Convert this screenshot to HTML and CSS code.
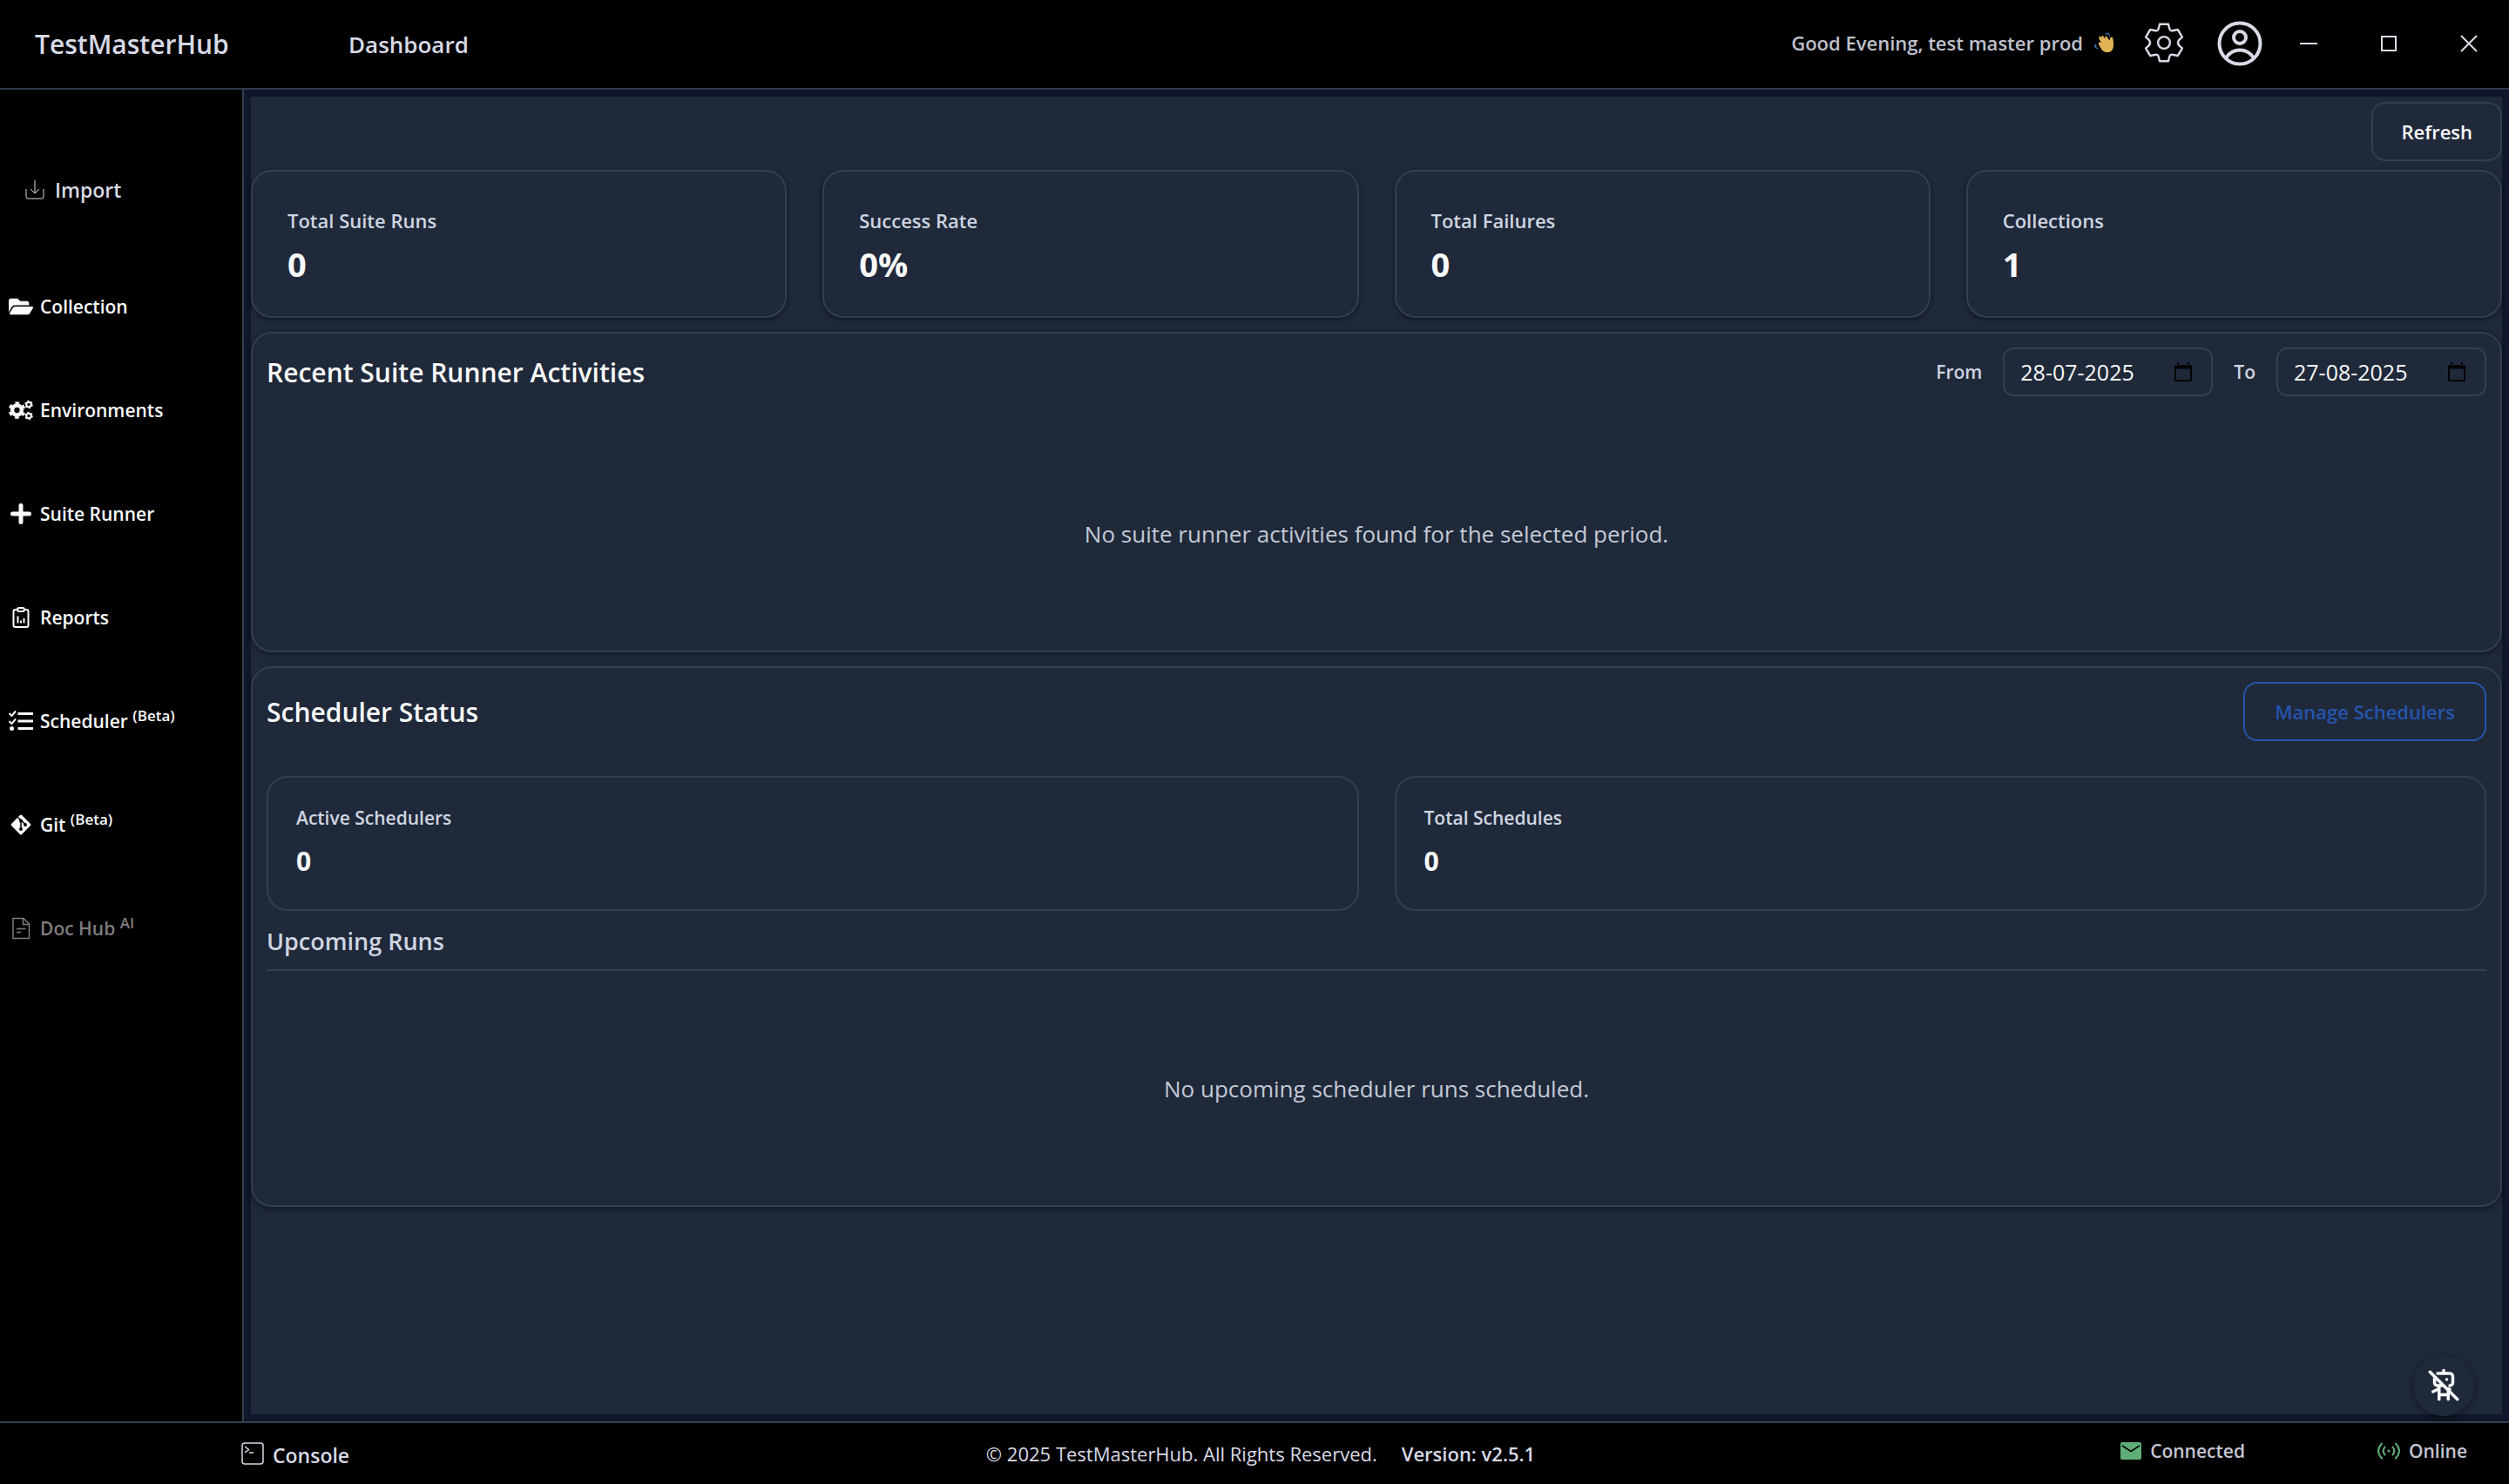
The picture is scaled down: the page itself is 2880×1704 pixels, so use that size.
FILE: index.html
```html
<!DOCTYPE html>
<html lang="en">
<head>
<meta charset="utf-8">
<title>TestMasterHub</title>
<link rel="stylesheet" href="styles.css">
</head>
<body>
<div class="app">
  <header class="topbar">
    <div class="brand">TestMasterHub</div>
    <h1 class="page-title">Dashboard</h1>
    <p class="greeting">Good Evening, test master prod
      <svg class="wave" viewBox="34 80 68 70" aria-hidden="true"><path fill="#e0b354" d="M54 106Q49 97 53 94Q57 92 61 98L64 102L60 95Q60 90 65 92L73 104L71 97Q73 91 78 95L87 108L89 99Q93 93 98 99Q101 112 100 128Q98 144 84 147Q70 149 61 138L51 122Q48 114 54 113L59 115Z"/><path fill="none" stroke="#3f6bb5" stroke-width="3" d="M72 86q6-5 9 3M79 83q8 2 8 13M42 119q-5 6 1 11M37 124q1 9 11 10"/></svg>
    </p>
    <button class="icon-btn gear-btn" aria-label="Settings"><svg viewBox="-67 -67 134 134" class="gear"><g fill="none" stroke="currentColor" stroke-width="7" stroke-linejoin="round"><path d="M-14.500-62H14.500L18-48Q20-38 28-40L46.400-43.600 60.900-18.400 50-9Q43 0 50 9L60.900 18.400 46.400 43.600 28 40Q20 38 18 48L14.500 62H-14.500L-18 48Q-20 38-28 40L-46.400 43.600-60.900 18.400-50 9Q-43 0-50-9L-60.900-18.400-46.400-43.600-28-40Q-20-38-18-48Z"/><circle r="20"/></g></svg></button>
    <button class="icon-btn user-btn" aria-label="Account"><svg viewBox="0 0 52 52" class="user"><g fill="none" stroke="currentColor" stroke-width="4"><circle cx="26" cy="26" r="23.500"/><circle cx="26" cy="19" r="7"/><path d="M10 42.500C18 30.500 34 30.500 42 42.500"/></g></svg></button>
    <div class="window-controls">
      <button class="icon-btn" aria-label="Minimize"><svg viewBox="0 0 20 20" class="win"><path d="M0 10H20"/></svg></button>
      <button class="icon-btn" aria-label="Maximize"><svg viewBox="0 0 20 20" class="win"><path d="M2 2H18V18H2Z"/></svg></button>
      <button class="icon-btn" aria-label="Close"><svg viewBox="0 0 20 20" class="win"><path d="M1 1L19 19M19 1L1 19"/></svg></button>
    </div>
  </header>

  <div class="body">
    <nav class="sidebar">
      <button class="import"><svg class="import-icon" viewBox="0 0 22 22"><path fill="none" stroke="currentColor" d="M1 10V19Q1 21 3 21H19Q21 21 21 19V10M11 0V15M6 10L11 15L16 10"/></svg>Import</button>
      <ul class="nav">
        <li><a href="#"><svg viewBox="0 0 576 512"><path fill="currentColor" d="M572.700 292.100 500.300 416.200A64 64 0 0 1 445 448H45c-18.500 0-30-20.100-20.700-36.100L96.700 287.800A64 64 0 0 1 152 256h400c18.500 0 30 20.100 20.700 36.100zM152 224h328v-48c0-26.500-21.500-48-48-48H272l-64-64H48C21.500 64 0 85.500 0 112v278l69-118.300C86.200 242.300 118 224 152 224z"/></svg>Collection</a></li>
        <li><a href="#"><svg viewBox="0 0 28 24"><g fill="none" stroke="currentColor"><circle cx="9.500" cy="12" r="5.400" stroke-width="4.500"/><circle cx="9.500" cy="12" r="8.500" stroke-width="2.600" stroke-dasharray="4.450 4.450" stroke-dashoffset="2.200" transform="rotate(30 9.500 12)"/><circle cx="23" cy="5.500" r="2.700" stroke-width="2"/><circle cx="23" cy="5.500" r="4" stroke-width="1.500" stroke-dasharray="2.100 2.100"/><circle cx="23" cy="18.500" r="2.700" stroke-width="2"/><circle cx="23" cy="18.500" r="4" stroke-width="1.500" stroke-dasharray="2.100 2.100"/></g></svg>Environments</a></li>
        <li><a href="#"><svg viewBox="0 0 28 28"><path stroke="currentColor" stroke-width="5" stroke-linecap="round" d="M14 4.500V23.500M4.500 14H23.500"/></svg>Suite Runner</a></li>
        <li><a href="#"><svg viewBox="0 0 28 28"><g fill="none" stroke="currentColor" stroke-width="2"><rect x="5.500" y="5" width="17" height="20" rx="2"/><path d="M10.500 12.500V20.500M14 17.500V20.500M17.500 15V20.500"/><rect x="10" y="3" width="8" height="4" rx="2" fill="#000"/></g></svg>Reports</a></li>
        <li><a href="#"><svg viewBox="0 0 28 28"><path fill="none" stroke="currentColor" stroke-width="3" d="M10.500 5.500H28M10.500 14H28M10.500 22.500H28"/><path fill="none" stroke="currentColor" stroke-width="2" d="M.500 5L3.500 8L8 2.500M.500 14L3.500 17L8 11.500"/><circle cx="3.500" cy="22.500" r="2.500" fill="currentColor"/></svg><span>Scheduler <sup>(Beta)</sup></span></a></li>
        <li><a href="#"><svg viewBox="0 0 28 28"><rect x="5.500" y="5.500" width="17" height="17" rx="1.500" fill="currentColor" transform="rotate(45 14 14)"/><g stroke="#000" stroke-width="1.500" fill="#000"><path fill="none" d="M10.500 5.500L19.500 14M14 9V19"/><circle cx="14" cy="9.500" r="1.200"/><circle cx="14" cy="19" r="1.200"/><circle cx="19" cy="14" r="1.200"/></g></svg><span>Git <sup>(Beta)</sup></span></a></li>
        <li><a href="#" class="muted"><svg viewBox="0 0 28 28"><path fill="none" stroke="currentColor" stroke-width="1.500" d="M5 2.500H17L23.500 9V25.500H5ZM16.500 2.500V9.500H23.500M9 14.500H19.500M9 18.500H14"/></svg><span>Doc Hub <sup>AI</sup></span></a></li>
      </ul>
    </nav>

    <div class="stage">
      <main class="panel">
        <div class="actions"><button class="btn">Refresh</button></div>

        <section class="stats">
          <article class="card stat"><h3>Total Suite Runs</h3><p>0</p></article>
          <article class="card stat"><h3>Success Rate</h3><p>0%</p></article>
          <article class="card stat"><h3>Total Failures</h3><p>0</p></article>
          <article class="card stat"><h3>Collections</h3><p>1</p></article>
        </section>

        <section class="card block">
          <div class="block-head">
            <h2>Recent Suite Runner Activities</h2>
            <div class="range">
              <label for="from">From</label>
              <div class="date"><input id="from" type="text" value="28-07-2025"><button class="icon-btn" aria-label="Pick start date"><svg viewBox="0 0 20 22"><path d="M2 3H18Q20 3 20 5V20Q20 22 18 22H2Q0 22 0 20V5Q0 3 2 3ZM2 7.500V20H18V7.500ZM3 0H5V4H3ZM15 0H17V4H15Z" fill-rule="evenodd"/></svg></button></div>
              <label for="to">To</label>
              <div class="date"><input id="to" type="text" value="27-08-2025"><button class="icon-btn" aria-label="Pick end date"><svg viewBox="0 0 20 22"><path d="M2 3H18Q20 3 20 5V20Q20 22 18 22H2Q0 22 0 20V5Q0 3 2 3ZM2 7.500V20H18V7.500ZM3 0H5V4H3ZM15 0H17V4H15Z" fill-rule="evenodd"/></svg></button></div>
            </div>
          </div>
          <p class="empty empty-recent">No suite runner activities found for the selected period.</p>
        </section>

        <section class="card block">
          <div class="block-head">
            <h2>Scheduler Status</h2>
            <button class="btn btn-primary">Manage Schedulers</button>
          </div>
          <div class="totals">
            <article class="total"><h3>Active Schedulers</h3><p>0</p></article>
            <article class="total"><h3>Total Schedules</h3><p>0</p></article>
          </div>
          <h3 class="upcoming">Upcoming Runs</h3>
          <p class="empty empty-upcoming">No upcoming scheduler runs scheduled.</p>
        </section>
      </main>
      <button class="bot" aria-label="Assistant off"><svg viewBox="0 0 24 24"><path fill="none" stroke="currentColor" stroke-width="2" stroke-linecap="round" stroke-linejoin="round" d="M8 4h8a2 2 0 0 1 2 2v4a2 2 0 0 1-2 2m-4 0H8a2 2 0 0 1-2-2V6M12 2v2M9 12v9M15 15v6M5 16l4-2M15 14l1 .500M9 18h6M14 8v.010M3 3l18 18"/></svg></button>
    </div>
  </div>

  <footer class="statusbar">
    <button class="console"><svg viewBox="0 0 26 26"><rect x="1" y="1" width="24" height="24" rx="3" fill="none" stroke="currentColor" stroke-width="1.500"/><path fill="none" stroke="currentColor" stroke-width="1.500" d="M4 5L8.500 8.500L4 12M9 12H14"/></svg><span>Console</span></button>
    <div class="legal"><span>© 2025 TestMasterHub. All Rights Reserved.</span><strong>Version: v2.5.1</strong></div>
    <div class="status">
      <span class="state"><svg viewBox="0 0 24 20"><rect width="24" height="20" rx="2" fill="#5fae78"/><path fill="none" stroke="#000" stroke-width="1.500" d="M2 4L12 10.500L22 4"/></svg>Connected</span>
      <span class="state"><svg viewBox="0 0 26 20" class="signal"><g fill="none" stroke="#5fae78" stroke-width="2" stroke-linecap="round"><path d="M5 1.500Q-3 10 5 18.500M21 1.500Q29 10 21 18.500M8.500 5.500Q5 10 8.500 14.500M17.500 5.500Q21 10 17.500 14.500"/></g><circle cx="13" cy="10" r="1.500" fill="#5fae78"/></svg>Online</span>
    </div>
  </footer>
</div>
</body>
</html>
```

FILE: styles.css
```css
* { box-sizing: border-box; }

body {
  margin: 0;
  background: #000;
  color: #f9fafb;
  font-family: "Open Sans", "Noto Sans", sans-serif;
  font-size: 22px;
}

h1, h2, h3, p, ul { margin: 0; padding: 0; }
h1, h2, h3, strong { font-weight: 600; }
ul { list-style: none; }
a { color: inherit; text-decoration: none; }
svg { display: block; flex: none; }

button {
  font: inherit;
  color: inherit;
  background: none;
  border: 0;
  padding: 0;
}

.app {
  min-height: 100vh;
  display: grid;
  grid-template-rows: auto 1fr auto;
}

/* Title bar */
.topbar {
  display: flex;
  align-items: center;
  height: 103px;
  padding: 0 36px 0 40px;
  border-bottom: 2px solid #2f3a4a;
  color: #d8dae6;
  box-shadow: 0 2px 8px #0008;
}
.brand { width: 360px; font-size: 30px; font-weight: 600; }
.page-title { font-size: 26px; }
.greeting {
  display: flex;
  align-items: center;
  gap: 12px;
  margin-left: auto;
  padding-bottom: 4px;
  font-weight: 600;
  color: #bfc1cb;
}
.wave { width: 24px; height: 24px; }
.icon-btn { display: flex; align-items: center; justify-content: center; }
.gear-btn { margin-left: 34px; padding-bottom: 4px; }
.gear { width: 46px; height: 46px; }
.user-btn { margin-left: 38px; padding-bottom: 2px; }
.user { width: 52px; height: 52px; }
.window-controls { display: flex; gap: 72px; margin-left: 43px; padding-bottom: 2px; }
.win { width: 20px; height: 20px; fill: none; stroke: currentColor; stroke-width: 2; }

/* Body */
.body { display: grid; grid-template-columns: 280px 1fr; }
.sidebar { border-right: 2px solid #333f50; padding-top: 85px; }
.import {
  display: flex;
  align-items: center;
  gap: 12px;
  height: 60px;
  margin: 0 0 44px 29px;
  font-size: 23px;
  font-weight: 600;
  color: #d8dae6;
}
.import-icon { width: 22px; height: 22px; }
.nav a {
  display: flex;
  align-items: center;
  gap: 8px;
  height: 119px;
  padding-left: 10px;
  font-size: 21px;
  font-weight: 600;
}
.nav svg { width: 28px; height: 28px; }
.nav sup { font-size: 17px; line-height: 0; }
.nav .muted { color: #7d7d7d; }

.stage {
  position: relative;
  display: flex;
  padding: 8px;
  background: #11162a;
}
.panel {
  flex: 1;
  display: flex;
  flex-direction: column;
  gap: 16px;
  background: #20293a;
}
.actions { display: flex; justify-content: flex-end; padding-top: 6px; margin-bottom: -6px; }
.btn {
  height: 68px;
  padding: 0 32px;
  border: 2px solid #333f4f;
  border-radius: 16px;
  font-weight: 600;
}
.btn-primary { padding: 0 34px; color: #2455ad; border-color: #2455ad; }

.card {
  border: 2px solid #333f4f;
  border-radius: 24px;
  background: #20293a;
  box-shadow: 0 2px 6px #0007;
}
.stats { display: grid; grid-template-columns: repeat(4, 1fr); gap: 41px; }
.stat { height: 170px; padding: 36px 40px; }
.stat h3, .total h3 { font-size: 22px; line-height: 40px; color: #cfd5e1; }
.total h3 { font-size: 21px; }
.stat p { font-size: 38px; line-height: 60px; font-weight: 700; }

.block { padding: 16px; }
.block-head { display: flex; align-items: center; justify-content: space-between; }
.block-head h2 { font-size: 30px; }
.range { display: flex; align-items: center; gap: 24px; }
.range label { font-size: 21px; font-weight: 600; color: #cfd5e1; }
.date {
  display: flex;
  align-items: center;
  justify-content: space-between;
  width: 241px;
  height: 56px;
  padding: 0 22px 0 18px;
  border: 2px solid #333f4f;
  border-radius: 12px;
}
.date input {
  width: 150px;
  padding: 0;
  border: 0;
  background: none;
  color: inherit;
  font: inherit;
  font-size: 25px;
}
.date svg { width: 20px; height: 22px; }

.empty {
  display: flex;
  align-items: center;
  justify-content: center;
  font-size: 26px;
  color: #c4cad6;
}
.empty-recent { height: 276px; padding-top: 40px; }
.empty-upcoming { height: 253px; padding-top: 16px; }

.totals {
  display: grid;
  grid-template-columns: repeat(2, 1fr);
  gap: 41px;
  margin-top: 40px;
}
.total {
  height: 155px;
  padding: 26px 32px;
  border: 2px solid #333f4f;
  border-radius: 24px;
}
.total p { font-size: 30px; line-height: 60px; font-weight: 700; }
.upcoming {
  height: 69px;
  font-size: 27px;
  line-height: 70px;
  color: #cfd5e1;
  border-bottom: 2px solid #333f4f;
}

.bot {
  position: absolute;
  right: 40px;
  bottom: 6px;
  width: 70px;
  height: 70px;
  display: flex;
  align-items: center;
  justify-content: center;
  border-radius: 50%;
  background: #20293a;
  box-shadow: 0 2px 8px #0007;
}
.bot svg { width: 42px; height: 42px; }

/* Status bar */
.statusbar {
  display: grid;
  grid-template-columns: 1fr auto 1fr;
  align-items: center;
  height: 72px;
  padding: 0 48px 0 62px;
  border-top: 2px solid #333f4f;
  color: #d8dae6;
}
.console {
  display: flex;
  align-items: center;
  gap: 10px;
  margin-left: 215px;
  font-size: 23px;
  font-weight: 600;
}
.console span { padding-top: 4px; }
.console svg { width: 26px; height: 26px; }
.legal { display: flex; gap: 28px; }
.status {
  display: flex;
  justify-content: flex-end;
  gap: 152px;
  padding-bottom: 6px;
  font-size: 21px;
  font-weight: 600;
  color: #c4c6d2;
}
.state { display: flex; align-items: center; gap: 10px; }
.state svg { width: 24px; height: 20px; }
.state .signal { width: 26px; }
```
